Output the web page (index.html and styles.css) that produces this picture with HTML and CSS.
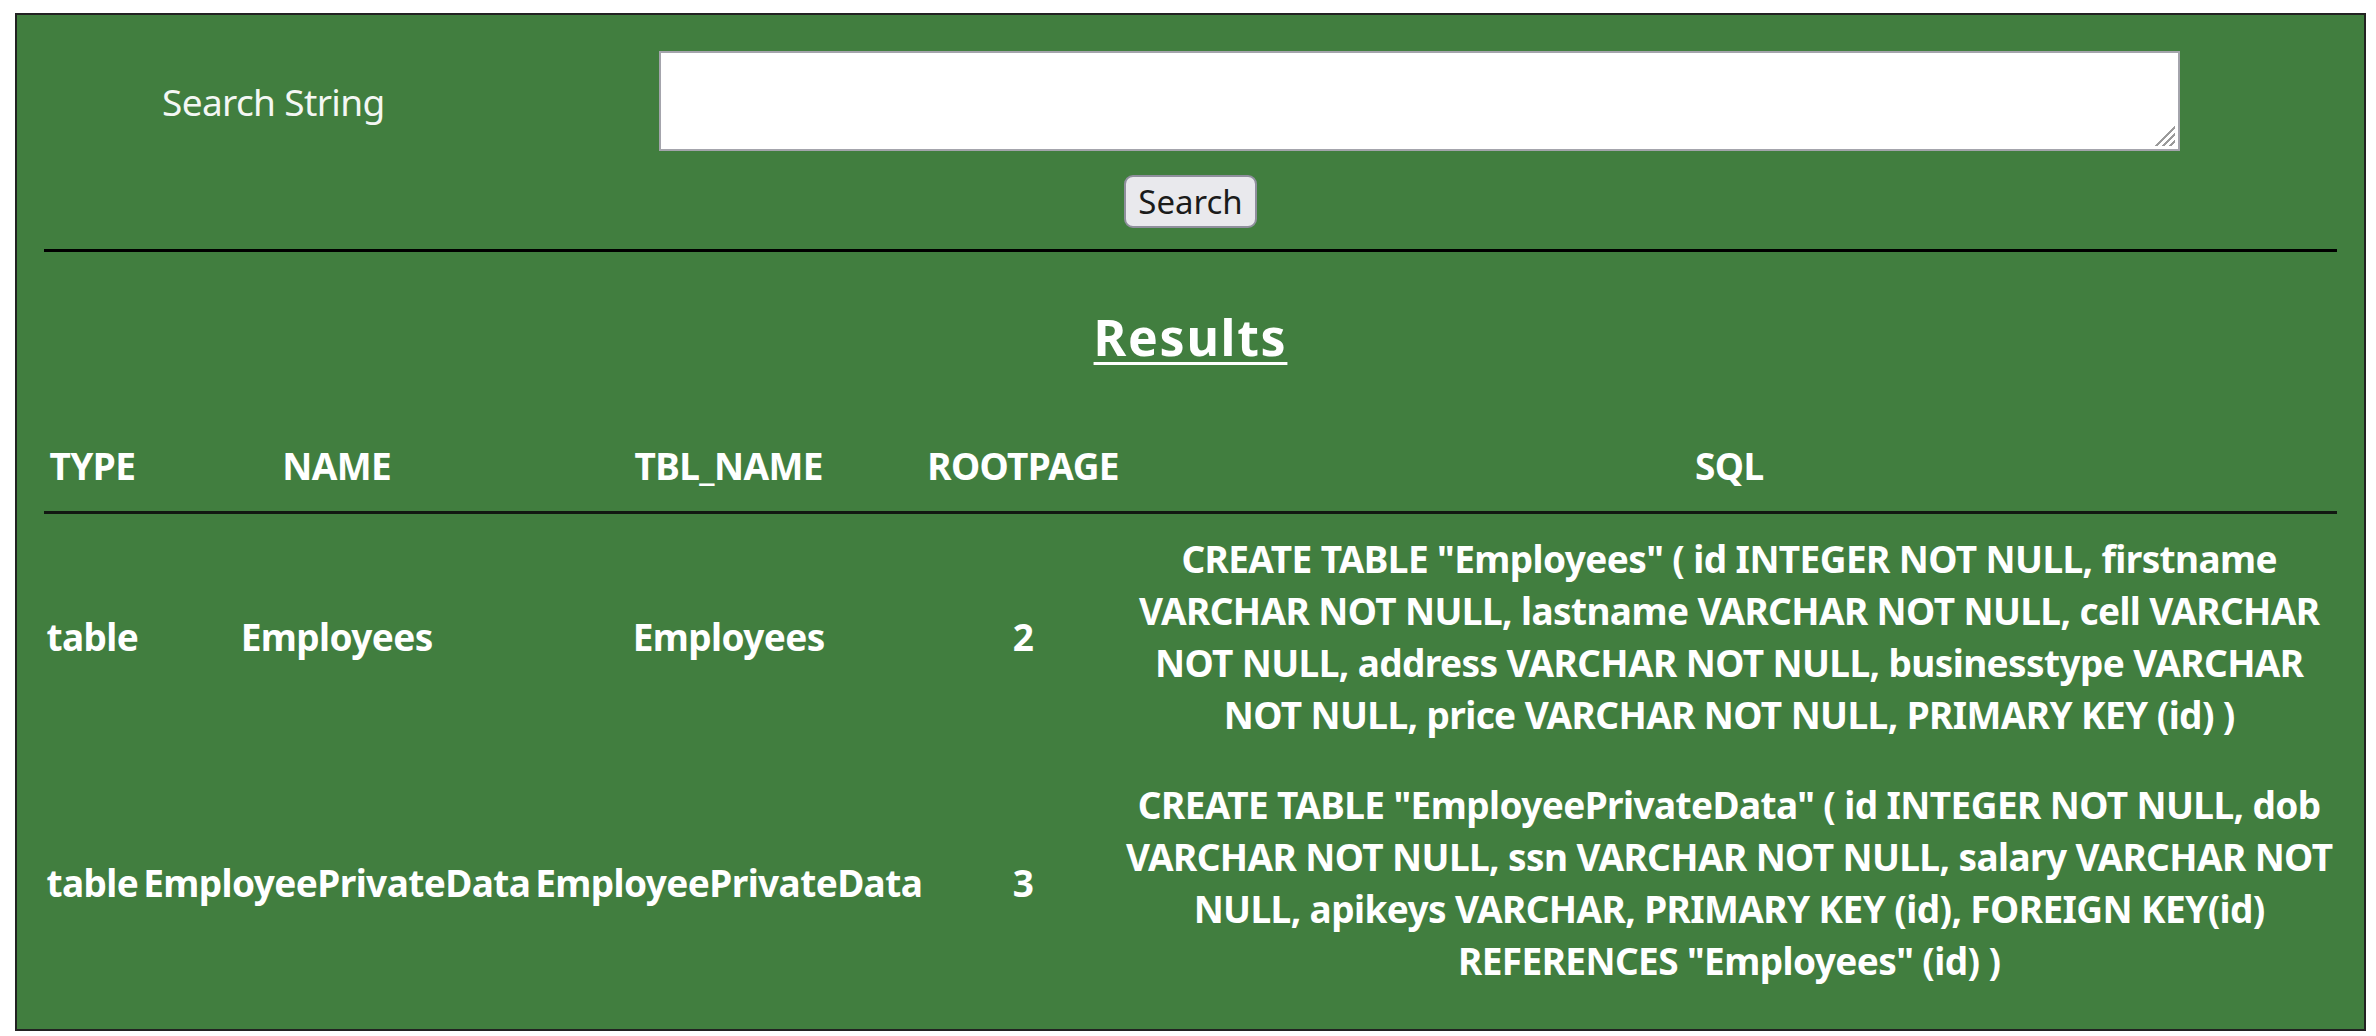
FILE: index.html
```html
<!DOCTYPE html>
<html lang="en">
<head>
<meta charset="utf-8">
<title>Search</title>
<link rel="stylesheet" href="styles.css">
</head>
<body>
<div class="box">
  <form class="search">
    <label class="label" for="q">Search String</label>
    <div class="field"><textarea id="q" class="input"></textarea><span class="grip"></span></div>
    <div class="actions"><button type="button" class="btn">Search</button></div>
  </form>
  <hr class="rule">
  <h2 class="title">Results</h2>
  <table class="results">
    <thead>
      <tr><th>TYPE</th><th>NAME</th><th>TBL_NAME</th><th>ROOTPAGE</th><th>SQL</th></tr>
    </thead>
    <tbody>
      <tr>
        <td>table</td><td>Employees</td><td>Employees</td><td>2</td>
        <td>CREATE TABLE "Employees" ( id INTEGER NOT NULL, firstname VARCHAR NOT NULL, lastname VARCHAR NOT NULL, cell VARCHAR NOT NULL, address VARCHAR NOT NULL, businesstype VARCHAR NOT NULL, price VARCHAR NOT NULL, PRIMARY KEY (id) )</td>
      </tr>
      <tr>
        <td>table</td><td>EmployeePrivateData</td><td>EmployeePrivateData</td><td>3</td>
        <td>CREATE TABLE "EmployeePrivateData" ( id INTEGER NOT NULL, dob VARCHAR NOT NULL, ssn VARCHAR NOT NULL, salary VARCHAR NOT NULL, apikeys VARCHAR, PRIMARY KEY (id), FOREIGN KEY(id) REFERENCES "Employees" (id) )</td>
      </tr>
    </tbody>
  </table>
</div>
</body>
</html>
```
FILE: styles.css
```css
html, body {
  margin: 0;
  background: #ffffff;
  font-family: "Noto Sans", "Open Sans", sans-serif;
}

.box {
  margin: 13px 10px 0 15px;
  border: 2px solid #222222;
  background: #417e3f;
  padding: 0 27px 23px;
  display: flex;
  flex-direction: column;
  color: #ffffff;
}

.search {
  display: grid;
  grid-template-columns: 20% 80%;
  margin: 36px 0 0;
}

.label {
  font-size: 37px;
  letter-spacing: -0.65px;
  justify-self: center;
  align-self: center;
  color: #f4f7f4;
}

.field {
  justify-self: center;
  position: relative;
  width: 1521px;
  height: 100px;
}

.input {
  display: block;
  width: 100%;
  height: 100%;
  box-sizing: border-box;
  margin: 0;
  border: 2px solid #a4a4ac;
  background: #ffffff;
  resize: none;
  outline: none;
}

.grip {
  position: absolute;
  right: 5px;
  bottom: 5px;
  width: 21px;
  height: 21px;
  background: repeating-linear-gradient(135deg, #9a9a9a 0 2px, transparent 2px 5px);
  clip-path: polygon(100% 0, 100% 100%, 0 100%);
}

.actions {
  grid-column: 1 / -1;
  justify-self: center;
  margin-top: 24px;
}

.btn {
  font-family: "Noto Sans", sans-serif;
  font-size: 33px;
  height: 53px;
  padding: 0 12px;
  border: 2px solid #8f8f9d;
  border-radius: 9px;
  background: #e9e9ed;
  color: #1b1b1b;
  line-height: 1;
}

.rule {
  margin: 21px 0 0;
  height: 0;
  border: 0;
  border-top: 3px solid #000000;
}

.title {
  margin: 51px 0 0;
  font-size: 50px;
  font-weight: 700;
  letter-spacing: 1.7px;
  line-height: normal;
  text-align: center;
  text-decoration: underline;
  text-decoration-thickness: 3px;
  text-underline-offset: 6px;
}

.results {
  margin-top: 50px;
  width: 100%;
  border-collapse: collapse;
  font-size: 37px;
  font-weight: 700;
  letter-spacing: -0.6px;
}

.results th,
.results td {
  padding: 19px 2.5px;
  text-align: center;
  vertical-align: middle;
  line-height: 52px;
}

.results th {
  border-bottom: 3px solid #111811;
}
```
